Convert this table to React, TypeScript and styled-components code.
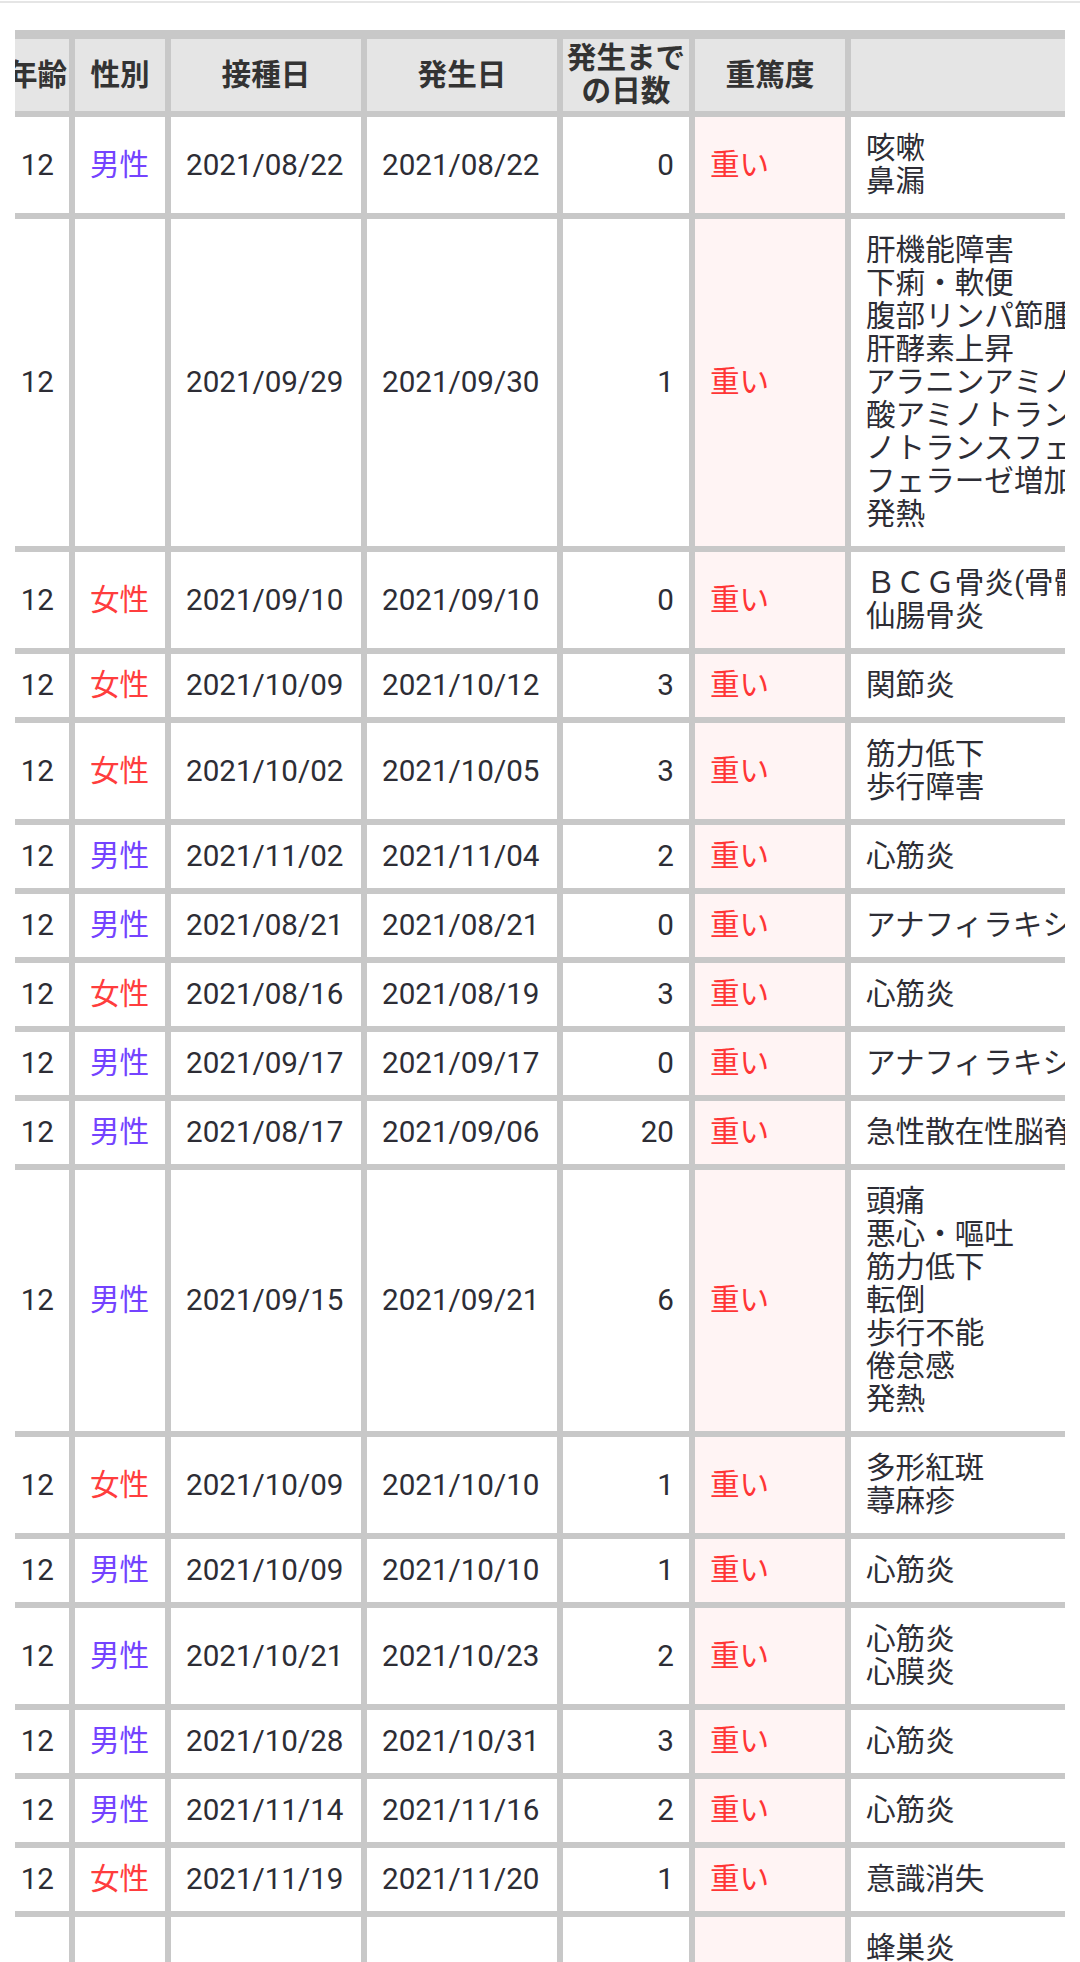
import React from "react";
import styled, { createGlobalStyle } from "styled-components";

const GlobalStyle = createGlobalStyle`
  *, *::before, *::after { box-sizing: border-box; }
  html, body { margin: 0; padding: 0; background: #ffffff; }
  body {
    font-family: Roboto, "Noto Sans CJK JP", "Noto Sans", sans-serif;
    color: #2d2d35;
  }
`;

const TopRule = styled.div`
  margin-top: 1px;
  height: 2px;
  background: #e5e5e5;
`;

const Scroller = styled.div`
  margin: 27px 15px 0 15px;
  overflow: hidden;
`;

const Table = styled.table`
  margin-left: -19px;
  width: 1564px;
  table-layout: fixed;
  border-collapse: separate;
  border-spacing: 6px;
  border: 3px solid #c8c8c8;
  background: #c8c8c8;
  font-size: 29.6px;
  line-height: 33px;
`;

const HeadCell = styled.th<{ $w: number; $wrap?: boolean }>`
  width: ${(p) => p.$w}px;
  background: #e5e5e5;
  font-weight: 700;
  color: #333333;
  text-align: center;
  vertical-align: middle;
  padding: 3px;
  white-space: ${(p) => (p.$wrap ? "normal" : "nowrap")};
`;

const Cell = styled.td<{ $align?: "left" | "right"; $tint?: boolean }>`
  background: ${(p) => (p.$tint ? "#fff4f4" : "#ffffff")};
  text-align: ${(p) => p.$align ?? "left"};
  vertical-align: middle;
  padding: 15px;
  white-space: nowrap;
  overflow: hidden;
`;

const Gender = styled.span<{ $male: boolean }>`
  color: ${(p) => (p.$male ? "#7443ff" : "#ff3d3d")};
`;

const Severe = styled.span`
  color: #ff3535;
`;

const SymptomLine = styled.div`
  white-space: nowrap;
`;

type Row = {
  age: string;
  sex: "男性" | "女性" | "";
  vac: string;
  onset: string;
  days: string;
  severe: boolean;
  symptoms: string[];
};

const rows: Row[] = [
  { age: "12", sex: "男性", vac: "2021/08/22", onset: "2021/08/22", days: "0", severe: true, symptoms: ["咳嗽", "鼻漏"] },
  {
    age: "12",
    sex: "",
    vac: "2021/09/29",
    onset: "2021/09/30",
    days: "1",
    severe: true,
    symptoms: [
      "肝機能障害",
      "下痢・軟便",
      "腹部リンパ節腫脹",
      "肝酵素上昇",
      "アラニンアミノトランスフェラーゼ増加・アスパラギン",
      "酸アミノトランスフェラーゼ増加・アラニンアミ",
      "ノトランスフェラーゼ増加・γ－グルタミルトランス",
      "フェラーゼ増加",
      "発熱",
    ],
  },
  { age: "12", sex: "女性", vac: "2021/09/10", onset: "2021/09/10", days: "0", severe: true, symptoms: ["ＢＣＧ骨炎(骨髄炎)", "仙腸骨炎"] },
  { age: "12", sex: "女性", vac: "2021/10/09", onset: "2021/10/12", days: "3", severe: true, symptoms: ["関節炎"] },
  { age: "12", sex: "女性", vac: "2021/10/02", onset: "2021/10/05", days: "3", severe: true, symptoms: ["筋力低下", "歩行障害"] },
  { age: "12", sex: "男性", vac: "2021/11/02", onset: "2021/11/04", days: "2", severe: true, symptoms: ["心筋炎"] },
  { age: "12", sex: "男性", vac: "2021/08/21", onset: "2021/08/21", days: "0", severe: true, symptoms: ["アナフィラキシー"] },
  { age: "12", sex: "女性", vac: "2021/08/16", onset: "2021/08/19", days: "3", severe: true, symptoms: ["心筋炎"] },
  { age: "12", sex: "男性", vac: "2021/09/17", onset: "2021/09/17", days: "0", severe: true, symptoms: ["アナフィラキシー"] },
  { age: "12", sex: "男性", vac: "2021/08/17", onset: "2021/09/06", days: "20", severe: true, symptoms: ["急性散在性脳脊髄炎"] },
  {
    age: "12",
    sex: "男性",
    vac: "2021/09/15",
    onset: "2021/09/21",
    days: "6",
    severe: true,
    symptoms: ["頭痛", "悪心・嘔吐", "筋力低下", "転倒", "歩行不能", "倦怠感", "発熱"],
  },
  { age: "12", sex: "女性", vac: "2021/10/09", onset: "2021/10/10", days: "1", severe: true, symptoms: ["多形紅斑", "蕁麻疹"] },
  { age: "12", sex: "男性", vac: "2021/10/09", onset: "2021/10/10", days: "1", severe: true, symptoms: ["心筋炎"] },
  { age: "12", sex: "男性", vac: "2021/10/21", onset: "2021/10/23", days: "2", severe: true, symptoms: ["心筋炎", "心膜炎"] },
  { age: "12", sex: "男性", vac: "2021/10/28", onset: "2021/10/31", days: "3", severe: true, symptoms: ["心筋炎"] },
  { age: "12", sex: "男性", vac: "2021/11/14", onset: "2021/11/16", days: "2", severe: true, symptoms: ["心筋炎"] },
  { age: "12", sex: "女性", vac: "2021/11/19", onset: "2021/11/20", days: "1", severe: true, symptoms: ["意識消失"] },
  { age: "12", sex: "女性", vac: "2021/11/20", onset: "2021/11/21", days: "1", severe: true, symptoms: ["蜂巣炎", "紅斑", "腫脹", "発熱"] },
];

export default function App() {
  return (
    <>
      <GlobalStyle />
      <TopRule />
      <Scroller>
        <Table>
          <thead>
            <tr>
              <HeadCell $w={64}>年齢</HeadCell>
              <HeadCell $w={90}>性別</HeadCell>
              <HeadCell $w={190}>接種日</HeadCell>
              <HeadCell $w={190}>発生日</HeadCell>
              <HeadCell $w={126} $wrap>発生まで<br />の日数</HeadCell>
              <HeadCell $w={150}>重篤度</HeadCell>
              <HeadCell $w={700}>症状名</HeadCell>
            </tr>
          </thead>
          <tbody>
            {rows.map((r, i) => (
              <tr key={i}>
                <Cell $align="right">{r.age}</Cell>
                <Cell>{r.sex && <Gender $male={r.sex === "男性"}>{r.sex}</Gender>}</Cell>
                <Cell>{r.vac}</Cell>
                <Cell>{r.onset}</Cell>
                <Cell $align="right">{r.days}</Cell>
                <Cell $tint>{r.severe && <Severe>重い</Severe>}</Cell>
                <Cell>
                  {r.symptoms.map((s, j) => (
                    <SymptomLine key={j}>{s}</SymptomLine>
                  ))}
                </Cell>
              </tr>
            ))}
          </tbody>
        </Table>
      </Scroller>
    </>
  );
}
